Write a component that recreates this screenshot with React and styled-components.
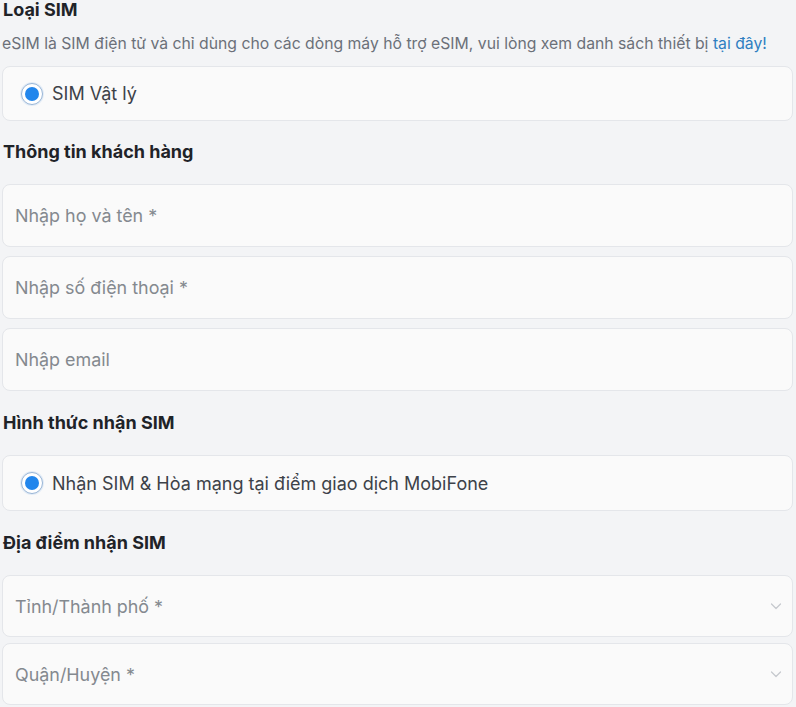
import React from "react";
import styled, { createGlobalStyle } from "styled-components";

const Global = createGlobalStyle`
  html, body { margin: 0; padding: 0; background: #f3f4f6; }
  body { font-family: Inter, "Noto Sans", sans-serif; -webkit-font-smoothing: antialiased; }
  * { box-sizing: border-box; }
`;

const Page = styled.div`
  width: 796px;
  height: 707px;
  overflow: hidden;
  padding: 0 3px 0 2px;
  display: flex;
  flex-direction: column;
`;

const Title = styled.h2`
  margin: ${(p) => p.$mt || 0}px 0 0 1px;
  font-size: 18px;
  line-height: 20px;
  font-weight: 700;
  color: #1f2328;
  flex: none;
`;

const Desc = styled.p`
  margin: 15px 0 0 0;
  font-size: 15.75px;
  line-height: 18px;
  color: #6b7079;
  white-space: nowrap;
  flex: none;
`;

const Link = styled.a`
  color: #2f7fc1;
  text-decoration: none;
`;

const OptionBox = styled.label`
  flex: none;
  margin-top: ${(p) => p.$mt}px;
  height: ${(p) => p.$h}px;
  border: 1px solid #e4e6ea;
  border-radius: 8px;
  background: #fafafa;
  display: flex;
  align-items: center;
  gap: 9px;
  padding-left: 18px;
  font-size: 18px;
  color: #3d4249;
`;

const Radio = styled.span`
  flex: none;
  width: 22px;
  height: 22px;
  border-radius: 50%;
  border: 1.5px solid #9ab6d6;
  background: #fff;
  display: flex;
  align-items: center;
  justify-content: center;
  box-shadow: 0 0 0 1px #e3ecf6;
  &::after {
    content: "";
    width: 14px;
    height: 14px;
    border-radius: 50%;
    background: #2286ec;
  }
`;

const Field = styled.div`
  flex: none;
  margin-top: ${(p) => p.$mt}px;
  height: ${(p) => p.$h || 63}px;
  border: 1px solid #e4e6ea;
  border-radius: 8px;
  background: #fafafa;
  display: flex;
  align-items: center;
  justify-content: space-between;
  padding: 0 9px 0 12px;
  font-size: 17.9px;
  color: #84898f;
`;

const Chevron = () => (
  <svg width="14" height="14" viewBox="0 0 14 14" fill="none">
    <path d="M2.5 5l4.5 4.5L11.5 5" stroke="#c5c8cd" strokeWidth="1.2" strokeLinecap="round" strokeLinejoin="round" />
  </svg>
);

export default function App() {
  return (
    <>
      <Global />
      <Page>
        <Title $mt={0}>Loại SIM</Title>
        <Desc>
          eSIM là SIM điện tử và chỉ dùng cho các dòng máy hỗ trợ eSIM, vui lòng xem danh sách thiết bị{" "}
          <Link href="#">tại đây!</Link>
        </Desc>
        <OptionBox $mt={13} $h={55}>
          <Radio />
          SIM Vật lý
        </OptionBox>

        <Title $mt={21}>Thông tin khách hàng</Title>
        <Field $mt={22}>Nhập họ và tên *</Field>
        <Field $mt={9}>Nhập số điện thoại *</Field>
        <Field $mt={9}>Nhập email</Field>

        <Title $mt={22}>Hình thức nhận SIM</Title>
        <OptionBox $mt={22} $h={56}>
          <Radio />
          Nhận SIM &amp; Hòa mạng tại điểm giao dịch MobiFone
        </OptionBox>

        <Title $mt={22}>Địa điểm nhận SIM</Title>
        <Field $mt={22} $h={62}>
          Tỉnh/Thành phố *
          <Chevron />
        </Field>
        <Field $mt={6} $h={62}>
          Quận/Huyện *
          <Chevron />
        </Field>
      </Page>
    </>
  );
}
